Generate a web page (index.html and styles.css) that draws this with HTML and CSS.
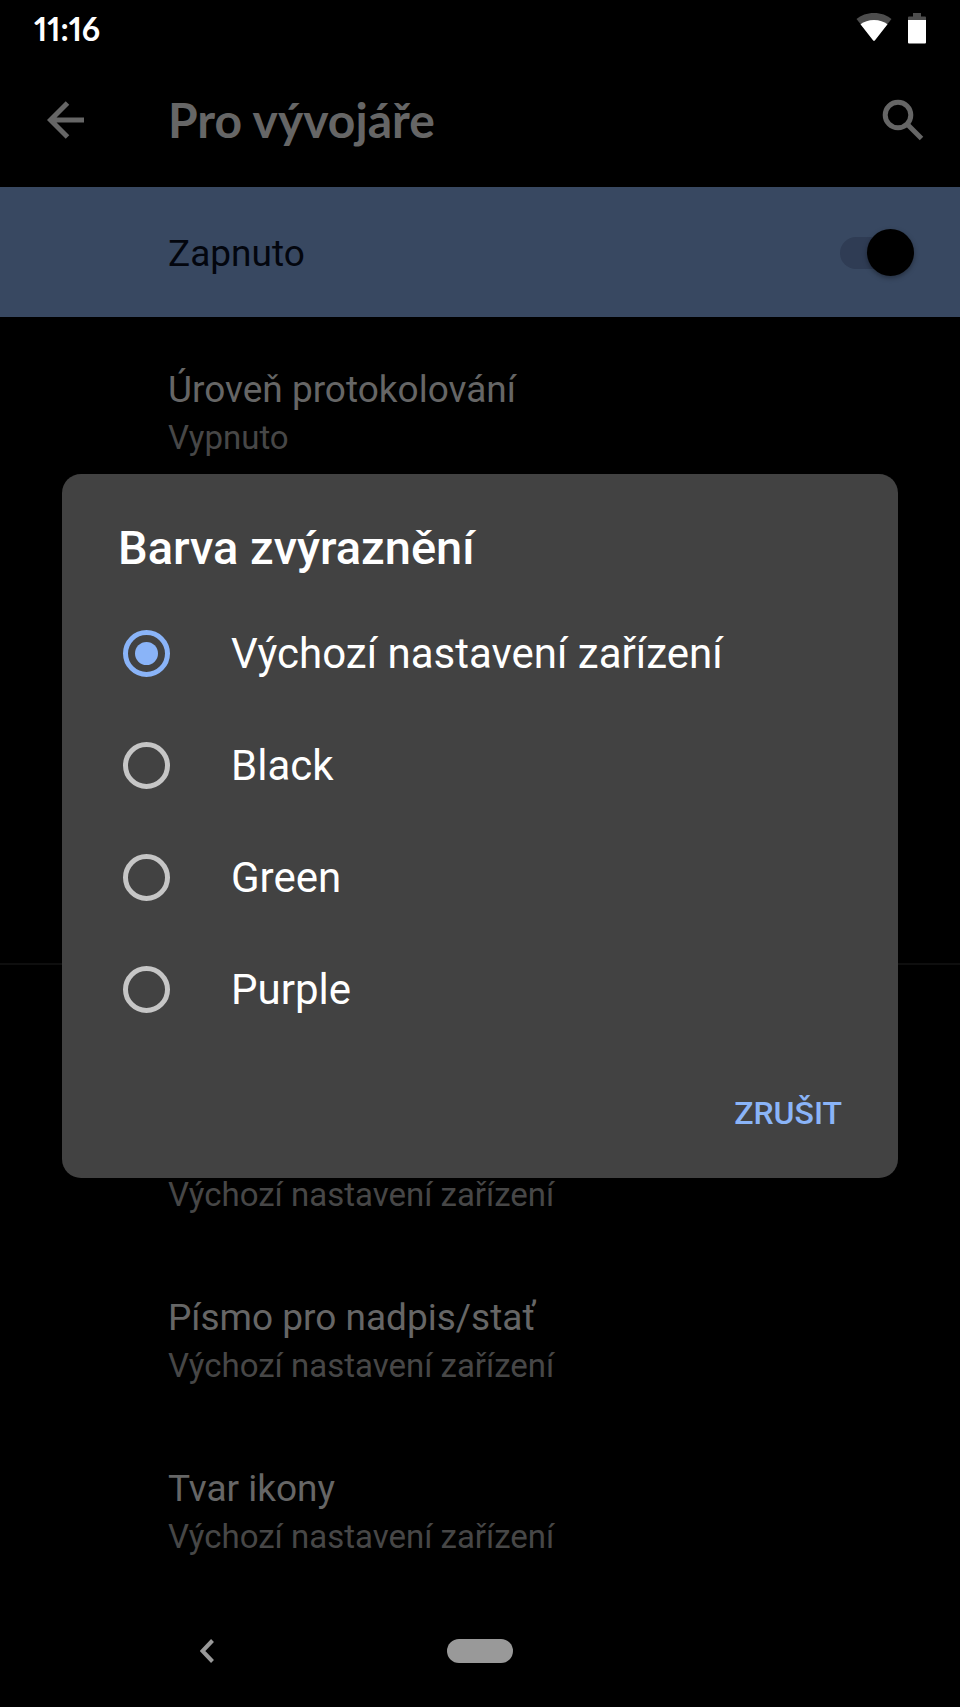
FILE: index.html
```html
<!DOCTYPE html>
<html lang="cs">
<head>
<meta charset="utf-8">
<meta name="viewport" content="width=device-width, initial-scale=1">
<title>Pro vývojáře</title>
<link rel="stylesheet" href="styles.css">
</head>
<body>
<div class="screen">
  <header class="status-bar">
    <time class="clock">11:16</time>
    <div class="status-icons">
      <svg class="icon-wifi" viewBox="0 0 36 30" aria-hidden="true">
        <path fill="#4d4d4d" d="M18 0C11 0 5 2.200 .5 6L18 28 35.500 6C31 2.200 25 0 18 0z"/>
        <path fill="#fff" d="M18 7C12.500 7 8 8.700 4.500 11.300L17 27.200q1 1.200 2 0L31.500 11.300C28 8.700 23.500 7 18 7z"/>
      </svg>
      <svg class="icon-battery" viewBox="0 0 18 31" aria-hidden="true">
        <path fill="#4d4d4d" d="M5 0h8v3.500h4q1 0 1 1V8H0V4.500q0-1 1-1h4z"/>
        <path fill="#fff" d="M0 7h18v22.500q0 1-1 1H1q-1 0-1-1z"/>
      </svg>
    </div>
  </header>

  <div class="toolbar">
    <button class="icon-button" type="button" aria-label="Zpět">
      <svg class="icon-back" viewBox="0 0 38 38" aria-hidden="true"><path d="M37 19H4M20.500 2L3.500 19l17 17"/></svg>
    </button>
    <h1 class="toolbar-title">Pro vývojáře</h1>
    <button class="icon-button" type="button" aria-label="Hledat">
      <svg class="icon-search" viewBox="0 0 42 42" aria-hidden="true"><circle cx="16" cy="16" r="12.800"/><path d="M25 25l14.500 14.500"/></svg>
    </button>
  </div>

  <label class="banner">
    <span>Zapnuto</span>
    <input class="switch" type="checkbox" role="switch" checked>
  </label>

  <main class="settings">
    <section class="group group-debug">
      <div class="row">
        <h2 class="row-title">Úroveň protokolování</h2>
        <p class="row-summary">Vypnuto</p>
      </div>
    </section>
    <section class="group group-theme">
      <div class="row">
        <p class="row-summary">Výchozí nastavení zařízení</p>
      </div>
      <div class="row">
        <h2 class="row-title">Písmo pro nadpis/stať</h2>
        <p class="row-summary">Výchozí nastavení zařízení</p>
      </div>
      <div class="row">
        <h2 class="row-title">Tvar ikony</h2>
        <p class="row-summary">Výchozí nastavení zařízení</p>
      </div>
    </section>
  </main>

  <nav class="nav-bar">
    <button class="nav-back" type="button" aria-label="Zpět">
      <svg class="icon-chevron" viewBox="0 0 14 24" aria-hidden="true"><path d="M12.500 1.500L2.500 12l10 10.500"/></svg>
    </button>
    <button class="nav-home" type="button" aria-label="Domů"></button>
  </nav>

  <div class="overlay">
    <form class="dialog" role="dialog" aria-labelledby="dialog-title">
      <h2 class="dialog-title" id="dialog-title">Barva zvýraznění</h2>
      <div class="options">
        <label class="option"><input class="radio" type="radio" name="accent" checked><span>Výchozí nastavení zařízení</span></label>
        <label class="option"><input class="radio" type="radio" name="accent"><span>Black</span></label>
        <label class="option"><input class="radio" type="radio" name="accent"><span>Green</span></label>
        <label class="option"><input class="radio" type="radio" name="accent"><span>Purple</span></label>
      </div>
      <div class="dialog-actions">
        <button class="text-button" type="button">ZRUŠIT</button>
      </div>
    </form>
  </div>
</div>
</body>
</html>
```
FILE: styles.css
```css
* {
  box-sizing: border-box;
}

body,
h1,
h2,
p {
  margin: 0;
}

body {
  background: #000;
  font-family: Roboto, "Liberation Sans", sans-serif;
}

button {
  border: 0;
  padding: 0;
  background: none;
  font-family: inherit;
}

svg {
  display: block;
}

.screen {
  position: relative;
  display: flex;
  flex-direction: column;
  min-height: 100vh;
}

.status-bar {
  display: flex;
  align-items: center;
  justify-content: space-between;
  height: 56px;
  padding: 0 34px;
}

.clock {
  color: #fff;
  font-family: Lato, sans-serif;
  font-size: 32px;
  font-weight: 700;
  font-variant-numeric: proportional-nums;
}

.status-icons {
  display: flex;
  align-items: center;
  gap: 16px;
}

.icon-wifi {
  width: 36px;
  height: 30px;
}

.icon-battery {
  width: 18px;
  height: 31px;
}

.toolbar {
  display: flex;
  align-items: center;
  height: 131px;
  padding: 0 36px 3px 47px;
}

.icon-button {
  flex: none;
}

.icon-back,
.icon-search,
.icon-chevron {
  fill: none;
  stroke: #666;
  stroke-width: 5;
}

.icon-back {
  width: 38px;
  height: 38px;
}

.icon-search {
  width: 42px;
  height: 42px;
}

.toolbar-title {
  flex: 1;
  margin-left: 83px;
  color: #666;
  font-family: Lato, sans-serif;
  font-size: 48px;
  font-weight: 700;
  line-height: 56px;
}

.banner {
  display: flex;
  align-items: center;
  justify-content: space-between;
  height: 130px;
  padding: 2px 46px 0 168px;
  background: #384861;
  color: #03060e;
  font-size: 37px;
}

.switch {
  appearance: none;
  position: relative;
  width: 74px;
  height: 48px;
  margin: 0;
}

.switch::before {
  content: "";
  position: absolute;
  inset: 8px 12px 8px 0;
  border-radius: 16px;
  background: #2f3c54;
}

.switch::after {
  content: "";
  position: absolute;
  right: 0;
  top: 0;
  width: 47px;
  height: 47px;
  border-radius: 50%;
  background: #000;
  box-shadow: 0 2px 5px rgba(0, 0, 0, 0.35);
}

.settings {
  flex: 1;
}

.group {
  display: flex;
  flex-direction: column;
  gap: 82px;
  padding: 0 168px;
}

.group-debug {
  min-height: 648px;
  padding-top: 51px;
  border-bottom: 2px solid #0e0e0e;
}

.group-theme {
  padding-top: 211px;
  padding-bottom: 39px;
}

.row {
  display: flex;
  flex-direction: column;
  gap: 7px;
}

.row-title {
  color: #666;
  font-size: 37px;
  font-weight: 400;
  line-height: 44px;
}

.row-summary {
  color: #474747;
  font-size: 33px;
  line-height: 38px;
}

.nav-bar {
  display: grid;
  grid-template-columns: 1fr auto 1fr;
  align-items: center;
  height: 112px;
}

.nav-back {
  justify-self: center;
  padding: 16px;
  margin-right: 34px;
}

.icon-chevron {
  width: 14px;
  height: 24px;
  stroke: #999;
  stroke-width: 4;
}

.nav-home {
  width: 66px;
  height: 24px;
  border-radius: 12px;
  background: #999;
}

.overlay {
  position: absolute;
  inset: 56px 0 112px;
  display: flex;
  align-items: center;
  padding: 0 62px;
}

.dialog {
  flex: 1;
  padding: 46px 56px 23px;
  border-radius: 19px;
  background: #424242;
  color: #fff;
}

.dialog-title {
  font-size: 47px;
  font-weight: 500;
  line-height: 56px;
}

.options {
  padding-top: 22px;
}

.option {
  display: flex;
  align-items: center;
  gap: 61px;
  height: 112px;
  padding-left: 5px;
  font-size: 42px;
}

.radio {
  appearance: none;
  display: grid;
  place-items: center;
  flex: none;
  width: 47px;
  height: 47px;
  margin: 0;
  border: 5px solid #c6c6c6;
  border-radius: 50%;
}

.radio:checked {
  border-color: #8ab4f8;
}

.radio:checked::before {
  content: "";
  width: 23px;
  height: 23px;
  border-radius: 50%;
  background: #8ab4f8;
}

.dialog-actions {
  display: flex;
  justify-content: flex-end;
  padding-top: 25px;
}

.text-button {
  height: 84px;
  color: #8ab4f8;
  font-size: 32px;
  font-weight: 500;
}
```
